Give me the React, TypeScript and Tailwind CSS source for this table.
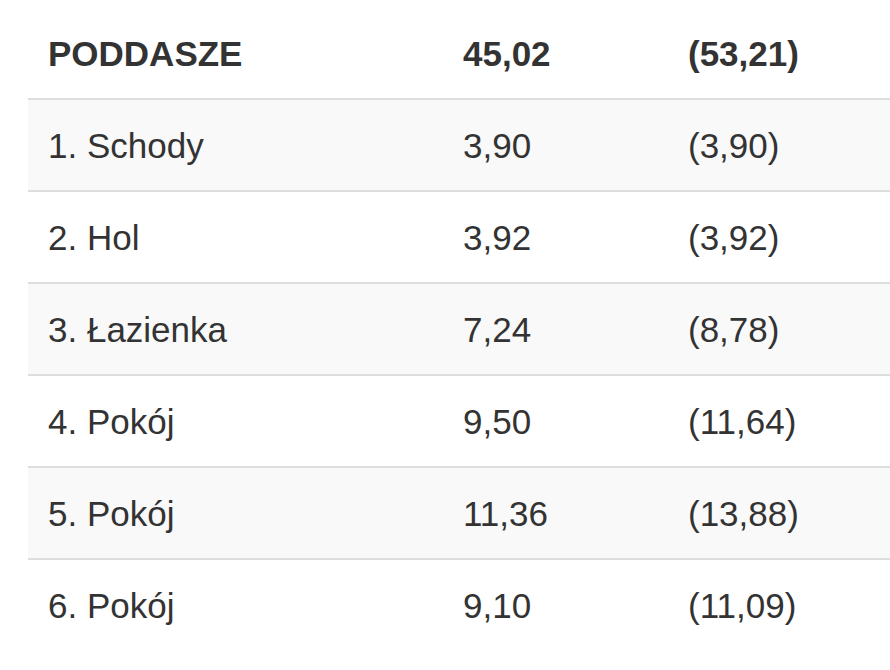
const rows = [
  { name: "1. Schody", net: "3,90", gross: "(3,90)" },
  { name: "2. Hol", net: "3,92", gross: "(3,92)" },
  { name: "3. Łazienka", net: "7,24", gross: "(8,78)" },
  { name: "4. Pokój", net: "9,50", gross: "(11,64)" },
  { name: "5. Pokój", net: "11,36", gross: "(13,88)" },
  { name: "6. Pokój", net: "9,10", gross: "(11,09)" },
];

export default function App() {
  return (
    <div className="w-[890px] h-[670px] overflow-hidden bg-white font-['Liberation_Sans',Arial,sans-serif] text-[35px] leading-none text-[#333]">
      <div className="ml-[28px]">
        {/* header */}
        <div className="grid grid-cols-[415px_225px_1fr] h-[100px] border-b-2 border-[#dddddd] pt-[8px] font-bold">
          <div className="flex items-center pl-[20px]">PODDASZE</div>
          <div className="flex items-center pl-[20px]">45,02</div>
          <div className="flex items-center pl-[20px]">(53,21)</div>
        </div>

        {rows.map((r, i) => (
          <div
            key={r.name}
            className={`grid grid-cols-[415px_225px_1fr] ${
              i === rows.length - 1 ? "h-[90px]" : "h-[92px] border-b-2 border-[#dddddd]"
            } ${i % 2 === 0 ? "bg-[#f9f9f9]" : "bg-white"}`}
          >
            <div className="flex items-center pl-[20px]">{r.name}</div>
            <div className="flex items-center pl-[20px]">{r.net}</div>
            <div className="flex items-center pl-[20px]">{r.gross}</div>
          </div>
        ))}
      </div>
    </div>
  );
}
